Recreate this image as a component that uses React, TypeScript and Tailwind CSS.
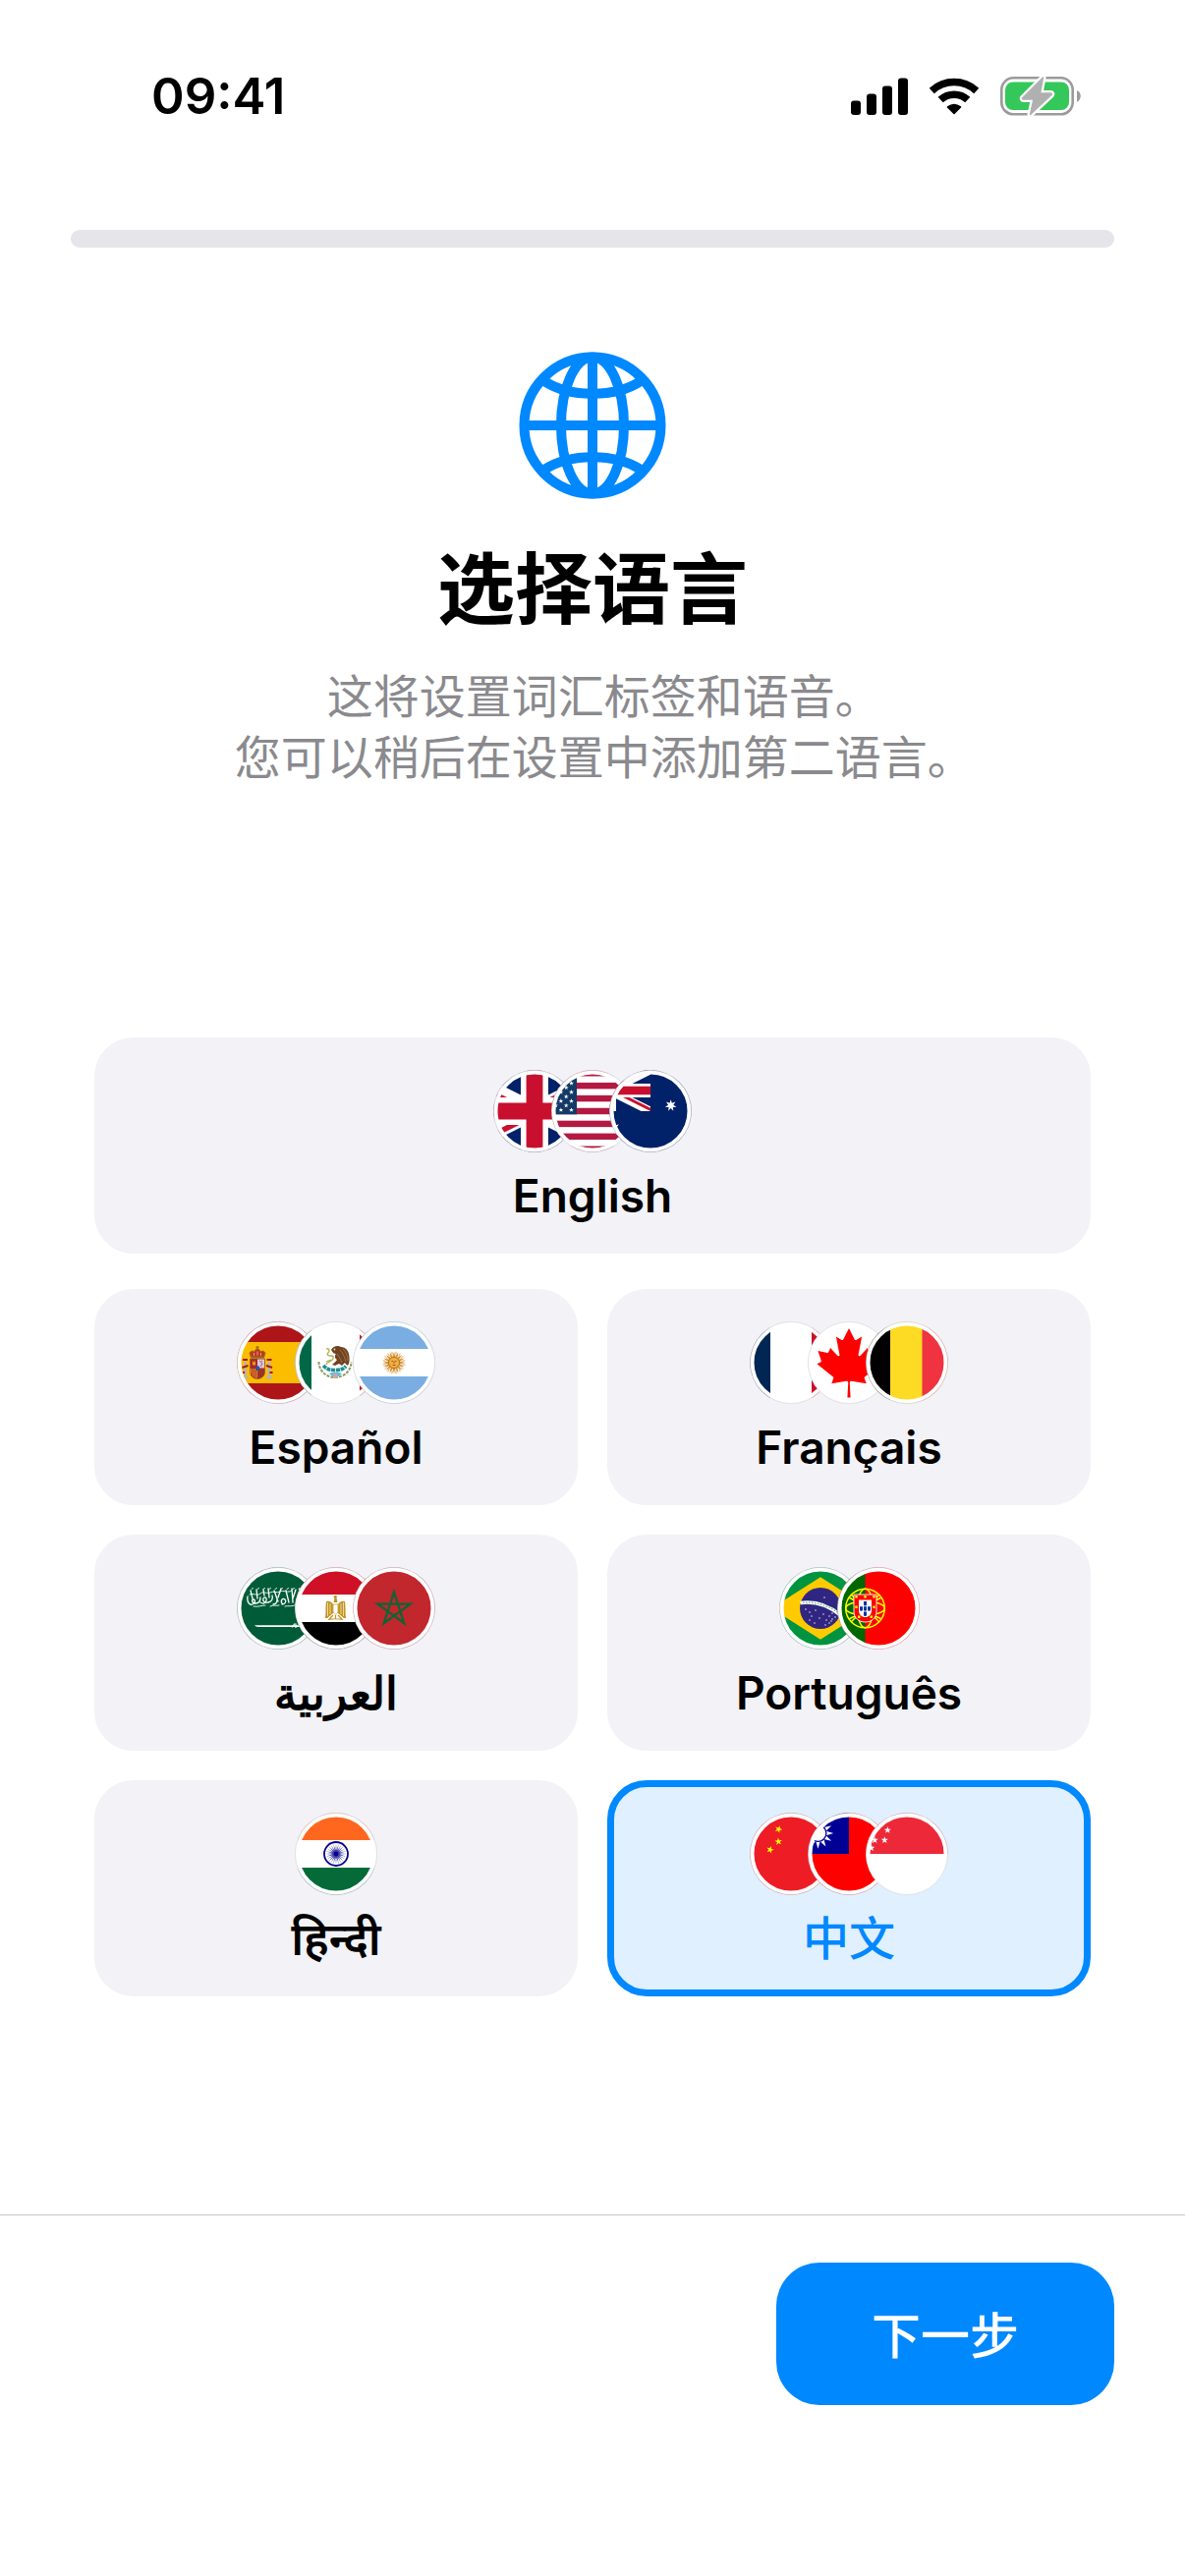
import React, { useState } from "react";

const starPoints = (
  cx: number,
  cy: number,
  r: number,
  tips = 5,
  inner = 0.382,
  turn = 0
) => {
  const points = [];
  for (let i = 0; i < tips * 2; i++) {
    const radius = i % 2 === 0 ? r : r * inner;
    const angle = (Math.PI * i) / tips - Math.PI / 2 + turn;
    points.push(
      `${(cx + radius * Math.cos(angle)).toFixed(2)},${(
        cy +
        radius * Math.sin(angle)
      ).toFixed(2)}`
    );
  }
  return points.join(" ");
};

interface FlagFrameProps {
  id: string;
  children: React.ReactNode;
}

// Round flag, 84 units wide, with a white ring just inside the edge.
const FlagFrame: React.FC<FlagFrameProps> = ({ id, children }) => (
  <svg viewBox="0 0 84 84" className="w-[84px] h-[84px]" aria-hidden="true">
    <clipPath id={`flag-${id}`}>
      <circle cx="42" cy="42" r="41.7" />
    </clipPath>
    <g clipPath={`url(#flag-${id})`}>{children}</g>
    <circle cx="42" cy="42" r="39.5" fill="none" stroke="#fff" strokeWidth="4" />
    <circle
      cx="42"
      cy="42"
      r="41.6"
      fill="none"
      stroke="#d2d2d6"
      strokeOpacity="0.8"
      strokeWidth="0.8"
    />
  </svg>
);

const UnionJack = () => (
  <>
    <clipPath id="uk-saltire">
      <path d="M30 15h30v15zv15H0zH0V0zV0h30z" />
    </clipPath>
    <path fill="#012169" d="M0 0h60v30H0z" />
    <path stroke="#fff" strokeWidth="6" d="M0 0l60 30m0-30L0 30" />
    <path
      clipPath="url(#uk-saltire)"
      stroke="#c8102e"
      strokeWidth="4"
      d="M0 0l60 30m0-30L0 30"
    />
    <path stroke="#fff" strokeWidth="10" d="M30 0v30M0 15h60" />
    <path stroke="#c8102e" strokeWidth="6" d="M30 0v30M0 15h60" />
  </>
);

const usStars: number[][] = [];
for (let row = 1; row <= 9; row++) {
  for (let col = 1; col <= 11; col++) {
    if ((row + col) % 2 === 0) {
      usStars.push([-37.8 + col * 5.3, row * 4.53]);
    }
  }
}

const brazilStars = [
  [27, 43], [31, 46], [33, 50], [37, 44], [41, 52], [45, 48], [48, 54],
  [51, 50], [54, 53], [54, 47], [51, 57], [47, 59], [57, 51], [31, 54],
  [36, 57], [46, 31], [53, 55],
];

const wave = [0, 1, 2, 3, 4, 5, 6, 7, 8];

const flags: Record<string, React.ReactNode> = {
  gb: (
    <svg viewBox="15 0 30 30" width="84" height="84">
      <UnionJack />
    </svg>
  ),
  us: (
    <>
      <path fill="#fff" d="M0 0h84v84H0z" />
      {[0, 2, 4, 6, 8, 10, 12].map((i) => (
        <rect key={i} y={i * 6.46} width="84" height="6.46" fill="#b31942" />
      ))}
      <path fill="#133a66" d="M0 0h26v45.2H0z" />
      {usStars.map(([x, y]) => (
        <polygon key={`${x}-${y}`} points={starPoints(x, y, 2.6)} fill="#fff" />
      ))}
    </>
  ),
  au: (
    <>
      <path fill="#012169" d="M0 0h84v84H0z" />
      <svg x="-42" y="0" width="84" height="42" viewBox="0 0 60 30">
        <UnionJack />
      </svg>
      <polygon points={starPoints(62.7, 36.3, 6, 7, 0.45)} fill="#fff" />
      <polygon points={starPoints(0, 63, 12.6, 7, 0.45)} fill="#fff" />
    </>
  ),
  es: (
    <>
      <path fill="#ad1519" d="M0 0h84v84H0z" />
      <path fill="#fabd00" d="M0 21h84v42H0z" />
      <g fill="#b9b4ac">
        <path d="M7 41h3v15H7zM31.500 41h3v15h-3z" />
        <path d="M5.500 56h6v2.500h-6zM30 56h6v2.500h-6z" />
      </g>
      <path
        d="M6 39h5M30.500 39h5M5.500 47l6-2M30 45l6 2M5 52h3M33.500 52h3"
        stroke="#ad1519"
        strokeWidth="2"
      />
      <path
        d="M13.500 38h15v13.500c0 4-3.500 7-7.500 7s-7.500-3-7.500-7z"
        fill="#b3202a"
        stroke="#8a6b2b"
        strokeWidth="0.700"
      />
      <path d="M21 38.400h7v9h-7z" fill="#d9c9d3" />
      <path d="M23 40l3 3-2 3M26 40l-2 2" stroke="#b0529a" strokeWidth="1" fill="none" />
      <path d="M14 48h7v9.500c-4 0-7-2.500-7-6z" fill="#e0a21c" />
      <path d="M15.500 48v8M17.500 48v9M19.500 48v9" stroke="#b3202a" strokeWidth="1" />
      <path d="M21.500 48h6.600v4c0 3-3 5.500-6.600 5.500z" fill="#9d3327" />
      <path d="M16 44.500v-4h1v1h1v-1h1v4z" fill="#e0a21c" />
      <ellipse cx="21" cy="47.500" rx="2.200" ry="2.600" fill="#2458a7" />
      <path
        d="M14.500 37l-1.500-5c1-2 4-2.500 5-1 .5-2 1.500-3 3-3s2.500 1 3 3c1-1.500 4-1 5 1l-1.500 5z"
        fill="#c0362c"
        stroke="#9a6a1d"
        strokeWidth="1"
      />
      <path d="M14.500 36.500h13M21 25v4M19.500 26.500h3" stroke="#9a6a1d" strokeWidth="1.300" />
      <path d="M17.500 32v3M21 30.500v4M24.500 32v3" stroke="#e8b34c" strokeWidth="0.900" />
    </>
  ),
  mx: (
    <>
      <path fill="#fff" d="M0 0h84v84H0z" />
      <path fill="#006847" d="M0 0h17v84H0z" />
      <path fill="#ce1126" d="M66 0h18v84H66z" />
      <path
        d="M24.500 41c0 9 7 16 16.500 16S57.500 50 57.500 41"
        fill="none"
        stroke="#8b9a5e"
        strokeWidth="2"
        strokeDasharray="3 1.200"
      />
      <path
        d="M29 45c4 4 7 4.500 12 4.500s8-.5 11-4"
        fill="none"
        stroke="#1d8f91"
        strokeWidth="3.600"
        strokeDasharray="4 0.700"
      />
      <path d="M35 53c4-2 9-2 13 0l-3 3h-7z" fill="#6cb9d8" />
      <path d="M39.500 53h3.500v5h-3.500z" fill="#d7a3a0" />
      <path
        d="M37 29c2-4 7-5 10-3 4 0 7 3 8 7 1 5 1 9-1 12-2-1-3-3-3-3l-3 3-3-2-4 2-3-1c2-2 4-3 5-5-2-1-3-4-1-6-2 0-3-1-5-4z"
        fill="#6f4222"
      />
      <path
        d="M46 29c3 3 5 8 6 12M43 33c2 3 4 6 5 9M49 28c3 3 5 7 5 12"
        stroke="#a97a44"
        strokeWidth="0.900"
        fill="none"
      />
      <path
        d="M32 28c3-1 4 2 2 4s0 3 3 3 3 3 0 5-5 2-5 4M37 39l-5 2"
        stroke="#b3a94f"
        strokeWidth="1.300"
        fill="none"
      />
      <circle cx="40.500" cy="28.500" r="0.900" fill="#e9d59b" />
    </>
  ),
  ar: (
    <>
      <path fill="#7aaee2" d="M0 0h84v84H0z" />
      <path fill="#fff" d="M0 28h84v28H0z" />
      <polygon points={starPoints(42, 42, 11.6, 16, 0.5)} fill="#d58a2a" />
      <polygon
        points={starPoints(42, 42, 11.4, 16, 0.5, Math.PI / 16)}
        fill="none"
        stroke="#d99a3f"
        strokeWidth="0.500"
      />
      <circle cx="42" cy="42" r="5.500" fill="#f0b040" stroke="#a8651b" strokeWidth="0.700" />
      <path
        d="M39.500 40.500h1.800M42.700 40.500h1.800M40.500 44.500h3M42 41v2"
        stroke="#85340a"
        strokeWidth="0.700"
      />
    </>
  ),
  fr: (
    <>
      <path fill="#fff" d="M0 0h84v84H0z" />
      <path fill="#002654" d="M0 0h21v84H0z" />
      <path fill="#ce1126" d="M63 0h21v84H63z" />
    </>
  ),
  ca: (
    <svg viewBox="2400 0 4800 4800" width="84" height="84">
      <path fill="#fff" d="M2400 0h4800v4800H2400z" />
      <path
        fill="#f00"
        d="m4890 4430-45-863a95 95 0 0 1 111-98l859 151-116-320a65 65 0 0 1 20-73l941-762-212-99a65 65 0 0 1-34-79l186-572-542 115a65 65 0 0 1-73-38l-105-247-423 454a65 65 0 0 1-111-57l204-1052-327 189a65 65 0 0 1-91-27l-332-652-332 652a65 65 0 0 1-91 27l-327-189 204 1052a65 65 0 0 1-111 57l-423-454-105 247a65 65 0 0 1-73 38l-542-115 186 572a65 65 0 0 1-34 79l-212 99 941 762a65 65 0 0 1 20 73l-116 320 859-151a95 95 0 0 1 111 98l-45 863z"
      />
    </svg>
  ),
  be: (
    <>
      <path fill="#fdda24" d="M0 0h84v84H0z" />
      <path fill="#000" d="M0 0h25v84H0z" />
      <path fill="#ef3340" d="M57.500 0H84v84H57.500z" />
    </>
  ),
  sa: (
    <>
      <path fill="#005c38" d="M0 0h84v84H0z" />
      <g fill="none" stroke="#fff" strokeWidth="1.300" strokeLinecap="round">
        <path d="M11 30c-1 6 2 9 5 8s3-5 1-5-2 4 2 4 5-3 5-6M14 24l2 8M20 23l1 9" />
        <path d="M24 36c3 2 5 1 6-2s-2-4-3-2 1 5 5 4 5-4 4-7M27 23l1 6M32 22l1 9" />
        <path d="M37 38c3 0 4-2 4-5M38 24l4 11M45 22l-3 9M46 37c-2-3 1-6 3-4s0 5-3 5" />
        <path d="M50 24l3 12M56 22l1 14M60 23l-3 9M60 37c2 1 4-1 4-4M64 22v14M68 22v14" />
        <path d="M13 28c4-2 7 2 11-1s7 1 10-1 7 1 10-1 8 2 12-1" strokeWidth="0.900" />
        <path d="M17 40c5 1 8-1 12-1M34 40c4-2 6 0 9-1M49 40c4-1 7 1 12-2" strokeWidth="0.900" />
        {wave.map((i) => (
          <path key={i} d={`M${15 + i * 6} 22.500l1.500-1`} strokeWidth="0.900" />
        ))}
      </g>
      <path d="M18 59.300h50v1.700H22c-2 0-3-.7-4-1.700z" fill="#fff" />
      <path d="M56 61.500l3-4M60 57.500v4.500" stroke="#fff" strokeWidth="1.200" />
    </>
  ),
  eg: (
    <>
      <path fill="#fff" d="M0 0h84v84H0z" />
      <path fill="#ce1126" d="M0 0h84v28H0z" />
      <path fill="#000" d="M0 56h84v28H0z" />
      <path
        d="M32 35c3-1 6 1 7 3v9l-6 5h-2c1-6 0-12 1-17zM51 35c-3-1-6 1-7 3v9l6 5h2c-1-6 0-12-1-17z"
        fill="#c09320"
      />
      <path
        d="M33.500 36v14M36 37v11M49.500 36v14M47 37v11"
        stroke="#f8ecc2"
        strokeWidth="0.800"
      />
      <path d="M39.500 31c0-1.500 1-2.300 2.200-2 1.200.3 1.600 1.400.8 2.200l1 4.800h-4l1-4z" fill="#c09320" />
      <path
        d="M39 38h5v7c0 1.600-1.200 2.600-2.500 3.300C40.200 47.600 39 46.600 39 45z"
        fill="#fff"
        stroke="#d0aa48"
        strokeWidth="0.900"
      />
      <path
        d="M34 53.500c5-1 10-1 15 0M39 49l-4 4M44 49l4 4M41.500 49v4"
        stroke="#c09320"
        strokeWidth="1.200"
        fill="none"
      />
    </>
  ),
  ma: (
    <>
      <path fill="#c1272d" d="M0 0h84v84H0z" />
      <path
        d="M42 25.500L52.300 57.200L25.400 37.600H58.600L31.700 57.200z"
        fill="none"
        stroke="#126233"
        strokeWidth="2.300"
      />
    </>
  ),
  br: (
    <>
      <path fill="#009440" d="M0 0h84v84H0z" />
      <path fill="#ffcb00" d="M-7.800 42L42 10.200 91.800 42 42 73.800z" />
      <circle cx="42" cy="42" r="21" fill="#302681" />
      <path d="M21.500 36.500C36 34.500 50 39 61.500 48.500" stroke="#fff" strokeWidth="3.400" fill="none" />
      <path
        d="M24 36.500C37 35 50 39.500 59 46"
        stroke="#5cae72"
        strokeWidth="1.200"
        strokeDasharray="1.500 1.500"
        fill="none"
      />
      {brazilStars.map(([x, y]) => (
        <circle key={`${x}-${y}`} cx={x} cy={y} r="0.700" fill="#fff" />
      ))}
    </>
  ),
  pt: (
    <>
      <path fill="#f00" d="M0 0h84v84H0z" />
      <path fill="#060" d="M0 0h28.500v84H0z" />
      <g fill="none" stroke="#ff0" strokeWidth="1.500">
        <circle cx="28.500" cy="42" r="19.800" />
        <ellipse cx="28.500" cy="42" rx="19.800" ry="7" />
        <ellipse cx="28.500" cy="42" rx="8" ry="19.800" />
        <path d="M12 31c10 6 23 6 33 0M12 53c10-6 23-6 33 0M14 28l29 28M43 28L14 56" />
      </g>
      <path
        d="M17 28h23v17c0 7-5 11-11.500 11S17 52 17 45z"
        fill="#f00"
        stroke="#fff"
        strokeWidth="0.900"
      />
      <path d="M22 33.500h13V44c0 4.500-3 7-6.500 7S22 48.500 22 44z" fill="#fff" />
      <g fill="#039">
        <path d="M27 35h3v3c0 2-3 2-3 0zM27 40.200h3v3c0 2-3 2-3 0zM27 45.400h3v3c0 2-3 2-3 0z" />
        <path d="M23 40.200h3v3c0 2-3 2-3 0zM31 40.200h3v3c0 2-3 2-3 0z" />
      </g>
      <g fill="#ff0">
        <path d="M18.300 29h2.400v2.600h-2.400zM27.300 29h2.400v2.600h-2.400zM36.300 29h2.400v2.600h-2.400z" />
        <path d="M18.300 39.500h2.400v2.600h-2.400zM36.300 39.500h2.400v2.600h-2.400zM21 49.500h2.400v2.600H21zM33.600 49.500H36v2.600h-2.400z" />
      </g>
    </>
  ),
  in: (
    <>
      <path fill="#fff" d="M0 0h84v84H0z" />
      <path fill="#ff671f" d="M0 0h84v28H0z" />
      <path fill="#046a38" d="M0 56h84v28H0z" />
      <circle cx="42" cy="42" r="12" fill="none" stroke="#06038d" strokeWidth="1.800" />
      <polygon points={starPoints(42, 42, 10.8, 24, 0.35)} fill="#06038d" fillOpacity="0.75" />
      <circle cx="42" cy="42" r="2.400" fill="#06038d" />
    </>
  ),
  cn: (
    <>
      <path fill="#ee1c25" d="M0 0h84v84H0z" />
      <polygon points={starPoints(29.3, 16.9, 4, 5, 0.382, 0.4)} fill="#ff0" />
      <polygon points={starPoints(29.3, 29.5, 4, 5, 0.382, -0.1)} fill="#ff0" />
      <polygon points={starPoints(20.8, 37.8, 4, 5, 0.382, 0.3)} fill="#ff0" />
    </>
  ),
  tw: (
    <>
      <path fill="#fe0000" d="M0 0h84v84H0z" />
      <path fill="#000095" d="M0 0h42v42H0z" />
      <polygon points={starPoints(10.5, 21, 15.7, 12, 0.54)} fill="#fff" />
      <circle cx="10.500" cy="21" r="8.400" fill="#fff" stroke="#000095" strokeWidth="1.400" />
    </>
  ),
  sg: (
    <>
      <path fill="#fff" d="M0 0h84v84H0z" />
      <path fill="#ed2939" d="M0 0h84v42H0z" />
      <polygon points={starPoints(22.3, 17.8, 3.8)} fill="#fff" />
      <polygon points={starPoints(9.2, 28, 3.8)} fill="#fff" />
      <polygon points={starPoints(19.3, 28, 3.8)} fill="#fff" />
      <polygon points={starPoints(5.8, 36, 3.8)} fill="#fff" />
    </>
  ),
};

interface Language {
  code: string;
  label: string;
  flags: string[];
}

const languages: Language[] = [
  { code: "en", label: "English", flags: ["gb", "us", "au"] },
  { code: "es", label: "Español", flags: ["es", "mx", "ar"] },
  { code: "fr", label: "Français", flags: ["fr", "ca", "be"] },
  { code: "ar", label: "العربية", flags: ["sa", "eg", "ma"] },
  { code: "pt", label: "Português", flags: ["br", "pt"] },
  { code: "hi", label: "हिन्दी", flags: ["in"] },
  { code: "zh", label: "中文", flags: ["cn", "tw", "sg"] },
];

interface LanguageCardProps {
  language: Language;
  selected: boolean;
  onSelect: (code: string) => void;
}

const LanguageCard: React.FC<LanguageCardProps> = ({
  language,
  selected,
  onSelect,
}) => (
  <button
    type="button"
    lang={language.code}
    aria-pressed={selected}
    onClick={() => onSelect(language.code)}
    className={`flex w-full h-[220px] flex-col items-center gap-4 rounded-[40px] border-[7px] pt-[26px] leading-[56px] cursor-pointer ${
      language.code === "zh"
        ? "text-[47px] font-medium"
        : "text-[46px] font-semibold"
    } ${
      selected
        ? "border-[#0088ff] bg-[#e0f0ff] text-[#0088ff]"
        : "border-[#f2f2f7] bg-[#f2f2f7] text-black"
    }`}
  >
    <span className="flex -space-x-[25px]">
      {language.flags.map((flag) => (
        <FlagFrame key={flag} id={flag}>
          {flags[flag]}
        </FlagFrame>
      ))}
    </span>
    <span>{language.label}</span>
  </button>
);

const StatusBar = () => (
  <header className="flex items-center justify-between pt-[66px] pr-[105px] pl-[154px]">
    <time className="text-[51px] leading-[64px] font-semibold">09:41</time>
    <div className="flex items-center gap-[22px]">
      <svg viewBox="0 0 58 38" className="w-[58px] h-[38px]" aria-hidden="true">
        <rect x="0" y="23.500" width="10" height="14.500" rx="3" />
        <rect x="16" y="16.500" width="10" height="21.500" rx="3" />
        <rect x="32" y="8.500" width="10" height="29.500" rx="3" />
        <rect x="48" y="0.500" width="10" height="37.500" rx="3" />
      </svg>
      <svg viewBox="0 0 50 38" className="w-[50px] h-[38px]" aria-hidden="true">
        <g fill="none" stroke="#000" strokeWidth="7.500">
          <path d="M2.300 13.500A33.300 33.300 0 0 1 47.700 13.500" />
          <path d="M11.200 22.600A20.200 20.200 0 0 1 38.800 22.600" />
        </g>
        <path
          d="M25 36.500L18.500 30Q25 25 31.500 30z"
          stroke="#000"
          strokeWidth="1.600"
          strokeLinejoin="round"
        />
      </svg>
      <svg viewBox="0 -1 83 42" className="w-[83px] h-[42px]" aria-hidden="true">
        <rect
          x="1.300"
          y="1.300"
          width="72.400"
          height="37"
          rx="12"
          fill="none"
          stroke="#9b9b9b"
          strokeWidth="2.600"
        />
        <rect x="5" y="5.500" width="65" height="28.500" rx="8" fill="#34c759" />
        <path d="M78 14c5 2 5 9 0 12z" fill="#9b9b9b" />
        <path
          d="M43.500 1L23 21.500c-.6.800-.3 1.500.6 1.500H34l-3.500 15.500L52 18.500c.6-.8.3-1.500-.6-1.500H40.500z"
          fill="#b0b0b0"
          stroke="#fff"
          strokeWidth="6"
          strokeLinejoin="round"
        />
        <path
          d="M43.500 1L23 21.500c-.6.800-.3 1.500.6 1.500H34l-3.500 15.500L52 18.500c.6-.8.3-1.500-.6-1.500H40.500z"
          fill="#b0b0b0"
          stroke="#b0b0b0"
          strokeWidth="1.500"
          strokeLinejoin="round"
        />
      </svg>
    </div>
  </header>
);

const GlobeIcon = () => (
  <svg
    viewBox="0 0 150 150"
    className="w-[150px] h-[150px]"
    fill="none"
    stroke="#0088ff"
    strokeWidth="10"
    strokeLinecap="round"
    aria-hidden="true"
  >
    <circle cx="75" cy="75" r="69.500" />
    <ellipse cx="75" cy="75" rx="32" ry="69.500" />
    <path d="M75 8v134M8 75h134" />
    <path d="M26 30c26 17 72 17 98 0M26 120c26-17 72-17 98 0" />
  </svg>
);

const App = () => {
  const [selected, setSelected] = useState("zh");

  return (
    <div
      lang="zh-CN"
      className="flex min-h-screen flex-col bg-white text-black font-[Inter,'Noto_Sans_CJK_SC','Noto_Sans',sans-serif]"
    >
      <StatusBar />

      <div
        role="progressbar"
        aria-valuenow={0}
        aria-valuemin={0}
        aria-valuemax={100}
        className="mx-[72px] mt-[104px] h-[18px] rounded-full bg-[#e5e5ea]"
      ></div>

      <main className="flex flex-1 flex-col items-center px-24 pt-[106px]">
        <GlobeIcon />
        <h1 className="mt-11 text-[79px] leading-[96px] font-bold">选择语言</h1>
        <p className="mt-[30px] text-center text-[47px] leading-[62px] text-[#8a8a8e] [font-feature-settings:'halt']">
          这将设置词汇标签和语音。
          <br />
          您可以稍后在设置中添加第二语言。
        </p>

        <div className="mt-[254px] flex w-full flex-col gap-9">
          <LanguageCard
            language={languages[0]}
            selected={selected === languages[0].code}
            onSelect={setSelected}
          />
          <div className="grid grid-cols-2 gap-[30px]">
            {languages.slice(1).map((language) => (
              <LanguageCard
                key={language.code}
                language={language}
                selected={selected === language.code}
                onSelect={setSelected}
              />
            ))}
          </div>
        </div>
      </main>

      <footer className="flex justify-end border-t border-[#c6c6c8] px-[72px] pt-12 pb-[174px]">
        <button
          type="button"
          className="h-[145px] w-[344px] rounded-[44px] bg-[#0088ff] pt-1 text-[50px] leading-[64px] font-medium text-white cursor-pointer"
        >
          下一步
        </button>
      </footer>
    </div>
  );
};

export default App;
